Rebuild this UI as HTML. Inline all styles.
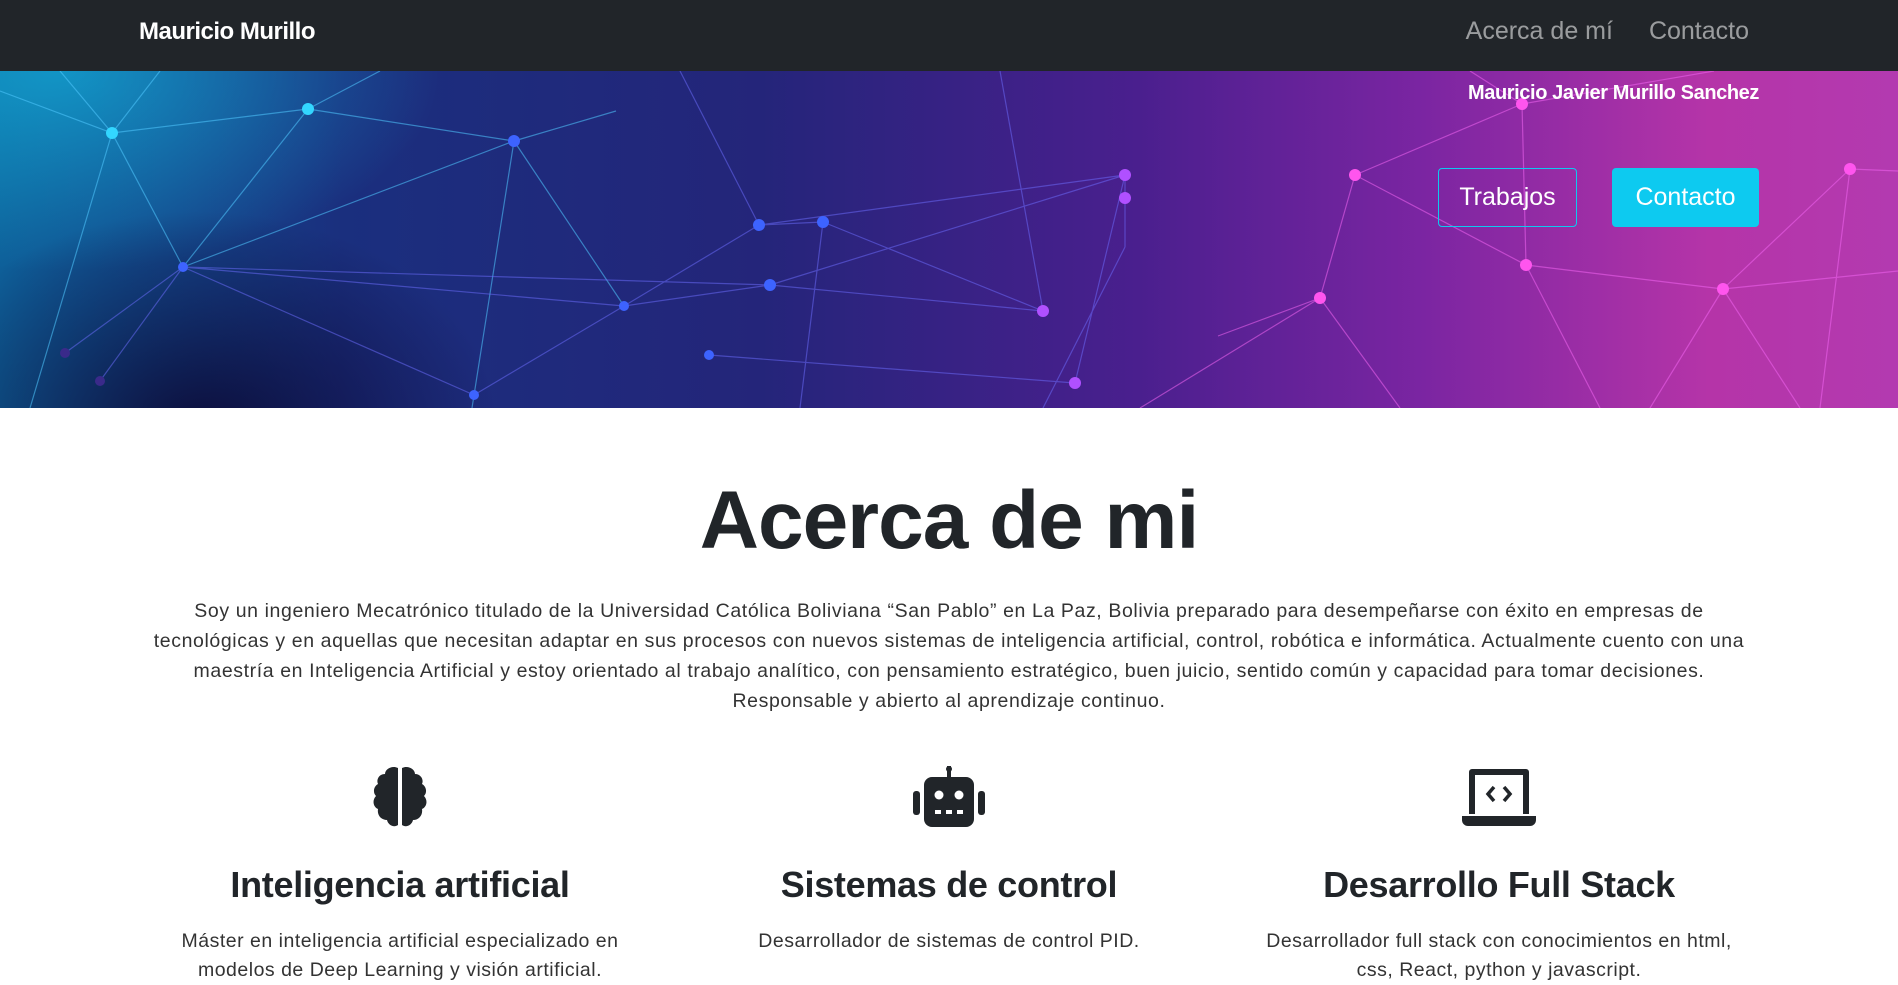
<!DOCTYPE html>
<html><head><meta charset="utf-8">
<style>
*{margin:0;padding:0;box-sizing:border-box}
body{width:1898px;height:977px;overflow:hidden;font-family:"Liberation Sans",sans-serif;background:#fff;color:#212529}
.nav{height:71px;background:#212529;position:relative}
.brand{position:absolute;left:139px;top:18px;color:#fff;font-weight:bold;font-size:24px;letter-spacing:-0.5px}
.links{position:absolute;right:149px;top:17px;font-size:25px;color:rgba(255,255,255,.55)}
.links span{margin-left:36px}
.hero{position:relative;height:337px;overflow:hidden;
background:linear-gradient(90deg,#0e5f99 0%,#1a2f7e 18%,#24257a 40%,#4a1f8e 60%,#7b25a2 75%,#b534a8 90%,#b33ab0 100%)}
.hero .shade{position:absolute;inset:0;background:radial-gradient(ellipse 300px 220px at 200px 360px,rgba(10,0,40,.8),rgba(10,0,40,0));}
.hero .top{position:absolute;inset:0;background:radial-gradient(ellipse 380px 200px at 60px 0,rgba(20,190,230,.6),rgba(20,190,230,0))}
.hero svg{position:absolute;left:0;top:0}
.name{position:absolute;right:139px;top:11px;color:#fff;font-weight:bold;font-size:20px;letter-spacing:-0.4px}
.btn{position:absolute;top:97px;height:59px;font-size:25px;color:#fff;display:flex;align-items:center;justify-content:center;border-radius:4px}
.b1{left:1438px;width:139px;border:1px solid #0dcaf0}
.b2{left:1612px;width:147px;background:#0dcaf0}
h1{text-align:center;font-size:82px;font-weight:bold;margin-top:68px;letter-spacing:-1px;line-height:90px}
.p{width:1622px;margin:30px auto 0;text-align:center;font-size:19.5px;line-height:30px;color:#333;letter-spacing:0.6px}
.cols{position:absolute;top:766px;left:0;width:1898px}
.col{position:absolute;width:480px;text-align:center}
.col svg{display:block;margin:0 auto}
.col h3{font-size:36px;font-weight:bold;margin-top:36px;letter-spacing:-0.3px}
.col p{font-size:19.5px;line-height:29px;margin-top:21px;color:#333;letter-spacing:0.5px}
</style></head><body>
<div class="nav"><div class="brand">Mauricio Murillo</div><div class="links"><span>Acerca de mí</span><span>Contacto</span></div></div>
<div class="hero">
<div class="top"></div><div class="shade"></div>
<svg width="1898" height="337" viewBox="0 0 1898 337" fill="none" stroke-width="1.2">
<g stroke="rgba(80,200,255,.55)">
<path d="M112 62L308 38M112 62L0 20M112 62L183 196M112 62L30 337M112 62L60 0M112 62L160 0M308 38L380 0M308 38L183 196M308 38L514 70M514 70L616 40M514 70L624 235M514 70L183 196M514 70L472 337"/>
</g>
<g stroke="rgba(110,110,255,.5)">
<path d="M183 196L770 214M183 196L624 235M183 196L100 310M183 196L65 282M183 196L474 324M624 235L770 214M624 235L759 154M624 235L474 324M759 154L1125 104M759 154L823 151M823 151L1043 240M770 214L1043 240M770 214L1125 104M823 151L800 337M709 284L1075 312M1075 312L1125 104M1125 104L1125 176M1125 176L1043 337M680 0L759 154M1000 0L1043 240"/>
</g>
<g stroke="rgba(240,100,240,.55)">
<path d="M1355 104L1522 33M1355 104L1320 227M1355 104L1526 194M1522 33L1526 194M1522 33L1714 0M1526 194L1723 218M1723 218L1850 98M1723 218L1898 200M1320 227L1218 265M1320 227L1140 337M1320 227L1400 337M1723 218L1650 337M1723 218L1800 337M1850 98L1898 100M1850 98L1820 337M1522 33L1470 0M1526 194L1600 337"/>
</g>
<g fill="#33d6ff"><circle cx="112" cy="62" r="6"/><circle cx="308" cy="38" r="6"/></g>
<g fill="#3d63ff"><circle cx="514" cy="70" r="6"/><circle cx="624" cy="235" r="5"/><circle cx="183" cy="196" r="5"/><circle cx="759" cy="154" r="6"/><circle cx="823" cy="151" r="6"/><circle cx="770" cy="214" r="6"/><circle cx="709" cy="284" r="5"/><circle cx="474" cy="324" r="5"/></g>
<g fill="#3a2a8a"><circle cx="65" cy="282" r="5"/><circle cx="100" cy="310" r="5"/></g>
<g fill="#b050ff"><circle cx="1125" cy="104" r="6"/><circle cx="1125" cy="127" r="6"/><circle cx="1043" cy="240" r="6"/><circle cx="1075" cy="312" r="6"/></g>
<g fill="#ff55ee"><circle cx="1355" cy="104" r="6"/><circle cx="1522" cy="33" r="6"/><circle cx="1526" cy="194" r="6"/><circle cx="1320" cy="227" r="6"/><circle cx="1723" cy="218" r="6"/><circle cx="1850" cy="98" r="6"/></g>
</svg>
<div class="name">Mauricio Javier Murillo Sanchez</div>
<div class="btn b1">Trabajos</div><div class="btn b2">Contacto</div>
</div>
<h1>Acerca de mi</h1>
<div class="p">Soy un ingeniero Mecatrónico titulado de la Universidad Católica Boliviana “San Pablo” en La Paz, Bolivia preparado para desempeñarse con éxito en empresas de tecnológicas y en aquellas que necesitan adaptar en sus procesos con nuevos sistemas de inteligencia artificial, control, robótica e informática. Actualmente cuento con una maestría en Inteligencia Artificial y estoy orientado al trabajo analítico, con pensamiento estratégico, buen juicio, sentido común y capacidad para tomar decisiones. Responsable y abierto al aprendizaje continuo.</div>
<div class="cols">
<div class="col" style="left:160px">
<svg width="62" height="62" viewBox="0 0 62 62" fill="#212529"><path d="M29 2c-6-3-13 1-13 6-6 0-9 6-7 10-5 3-5 9-2 12-4 4-3 11 2 13-1 6 3 11 9 11 1 5 7 8 11 5z"/><path d="M33 2c6-3 13 1 13 6 6 0 9 6 7 10 5 3 5 9 2 12 4 4 3 11-2 13 1 6-3 11-9 11-1 5-7 8-11 5z"/></svg>
<h3>Inteligencia artificial</h3>
<p>Máster en inteligencia artificial especializado en modelos de Deep Learning y visión artificial.</p></div>
<div class="col" style="left:709px">
<svg width="78" height="62" viewBox="0 0 78 62" fill="#212529"><rect x="37" y="0" width="4" height="12"/><circle cx="39" cy="3" r="3"/><rect x="14" y="11" width="50" height="50" rx="8"/><rect x="3" y="25" width="7" height="24" rx="3"/><rect x="68" y="25" width="7" height="24" rx="3"/><circle cx="29" cy="29" r="4.5" fill="#fff"/><circle cx="49" cy="29" r="4.5" fill="#fff"/><rect x="25" y="44" width="6" height="4" fill="#fff"/><rect x="36" y="44" width="6" height="4" fill="#fff"/><rect x="47" y="44" width="6" height="4" fill="#fff"/></svg>
<h3>Sistemas de control</h3>
<p>Desarrollador de sistemas de control PID.</p></div>
<div class="col" style="left:1259px">
<svg width="78" height="62" viewBox="0 0 78 62" fill="#212529"><path d="M12 3h54a3 3 0 0 1 3 3v42h-6V9H15v39H9V6a3 3 0 0 1 3-3z"/><path d="M2 50h74v4a6 6 0 0 1-6 6H8a6 6 0 0 1-6-6z"/><path d="M34 21l-6 7 6 7" stroke="#212529" stroke-width="3.5" fill="none"/><path d="M44 21l6 7-6 7" stroke="#212529" stroke-width="3.5" fill="none"/></svg>
<h3>Desarrollo Full Stack</h3>
<p>Desarrollador full stack con conocimientos en html, css, React, python y javascript.</p></div>
</div>
</body></html>
